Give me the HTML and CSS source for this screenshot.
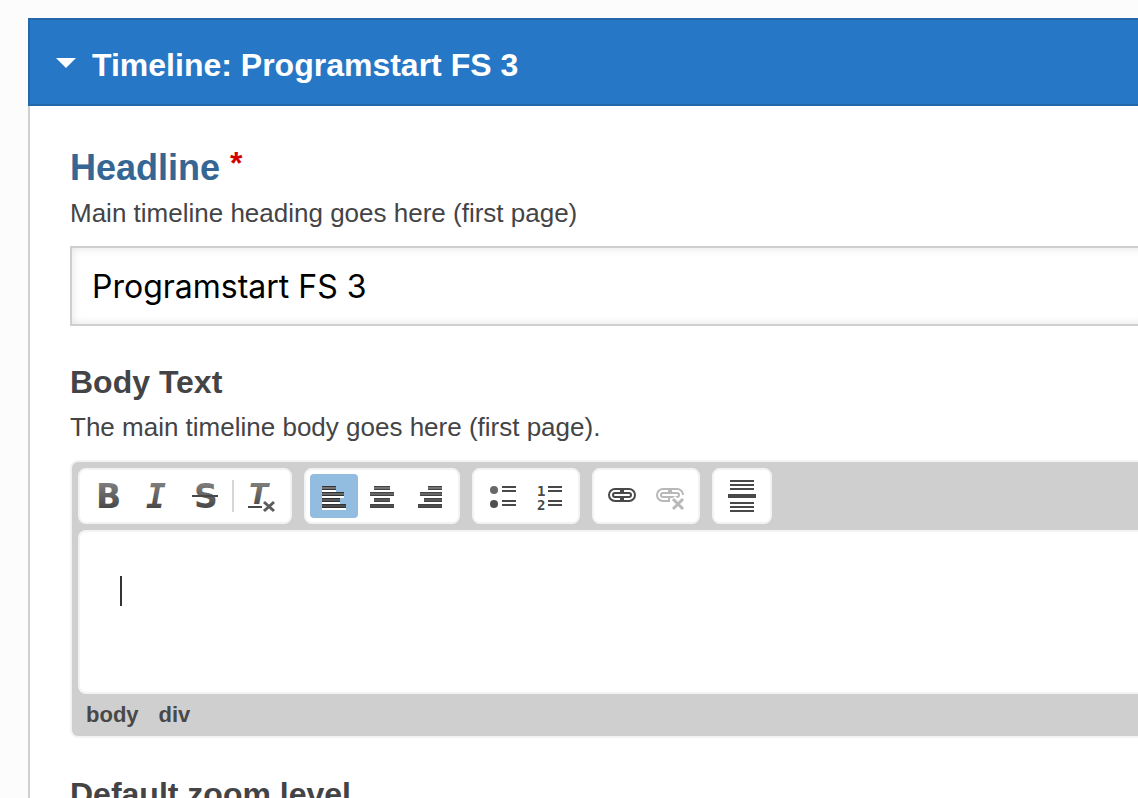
FILE: index.html
```html
<!DOCTYPE html>
<html lang="en">
<head>
<meta charset="utf-8">
<title>Timeline: Programstart FS 3</title>
<link rel="stylesheet" href="styles.css">
</head>
<body>
<svg class="defs" aria-hidden="true">
  <defs>
    <linearGradient id="ink" gradientUnits="userSpaceOnUse" x1="0" y1="10" x2="0" y2="34">
      <stop offset="0" stop-color="#7c7c7c"/>
      <stop offset="1" stop-color="#484848"/>
    </linearGradient>
  </defs>
</svg>
<main class="panel">
  <header class="panel-header">
    <button class="panel-toggle" type="button" aria-expanded="true">
      <svg class="caret-icon" viewBox="0 0 20 12"><path d="M0 1h20L10 11z" fill="#fff"/></svg>
      <span>Timeline: Programstart FS 3</span>
    </button>
  </header>
  <form class="panel-body">
    <div class="field">
      <label class="label label-main" for="headline">Headline <span class="required">*</span></label>
      <p class="hint">Main timeline heading goes here (first page)</p>
      <input class="text-input" id="headline" type="text" value="Programstart FS 3">
    </div>
    <div class="field">
      <span class="label" id="body-label">Body Text</span>
      <p class="hint hint-body">The main timeline body goes here (first page).</p>
      <div class="editor">
        <div class="toolbar" role="toolbar" aria-label="Formatting">
          <div class="group">
            <button class="tool" type="button" aria-label="Bold"><svg viewBox="0 0 48 44"><text class="glyph" x="12" y="34">B</text></svg></button>
            <button class="tool" type="button" aria-label="Italic"><svg viewBox="0 0 48 44"><text class="glyph glyph-slab" x="14" y="34">I</text></svg></button>
            <button class="tool" type="button" aria-label="Strikethrough"><svg viewBox="0 0 48 44"><text class="glyph" x="14" y="34">S</text><path d="M12 22h26" stroke="#484848" stroke-width="2"/></svg></button>
            <span class="separator"></span>
            <button class="tool" type="button" aria-label="Remove format"><svg viewBox="0 0 48 44"><text class="glyph glyph-slant" x="11" y="30">T</text><path d="M10 33h14" stroke="#484848" stroke-width="2"/><path d="M26 28l10 9M36 28l-10 9" stroke="#5c5c5c" stroke-width="3"/></svg></button>
          </div>
          <div class="group">
            <button class="tool tool-on" type="button" aria-label="Align left" aria-pressed="true"><svg viewBox="0 0 48 44"><path d="M12 14h14v4H12zM12 20h22v4H12zM12 26h18v4H12zM12 32h24v4H12z" fill="#fff"/><path d="M12 12h14v4H12zM12 18h22v4H12zM12 24h18v4H12zM12 30h24v4H12z" fill="url(#ink)"/><path d="M12 12.5h14M12 18.5h22M12 24.5h18M12 30.5h24M12 15.5h14M12 21.5h22M12 27.5h18M12 33.5h24" stroke="#333"/></svg></button>
            <button class="tool" type="button" aria-label="Center"><svg viewBox="0 0 48 44"><path d="M16 12h16v4H16zM12 18h24v4H12zM16 24h16v4H16zM12 30h24v4H12z" fill="url(#ink)"/><path d="M16 12.5h16M12 18.5h24M16 24.5h16M12 30.5h24M16 15.5h16M12 21.5h24M16 27.5h16M12 33.5h24" stroke="#444"/></svg></button>
            <button class="tool" type="button" aria-label="Align right"><svg viewBox="0 0 48 44"><path d="M22 12h14v4H22zM14 18h22v4H14zM18 24h18v4H18zM12 30h24v4H12z" fill="url(#ink)"/><path d="M22 12.5h14M14 18.5h22M18 24.5h18M12 30.5h24M22 15.5h14M14 21.5h22M18 27.5h18M12 33.5h24" stroke="#444"/></svg></button>
          </div>
          <div class="group">
            <button class="tool" type="button" aria-label="Bulleted list"><svg viewBox="0 0 48 44"><circle cx="16" cy="16" r="4" fill="#686868"/><circle cx="16" cy="30" r="4" fill="#505050"/><path d="M24 13h14M24 17h14M24 27h14M24 31h14" stroke="#484848" stroke-width="2"/></svg></button>
            <button class="tool" type="button" aria-label="Numbered list"><svg viewBox="0 0 48 44"><text class="digit" x="11" y="22">1</text><text class="digit" x="11" y="36">2</text><path d="M22 13h14M22 17h14M22 27h14M22 31h14" stroke="#484848" stroke-width="2"/></svg></button>
          </div>
          <div class="group">
            <button class="tool" type="button" aria-label="Link"><svg viewBox="0 0 48 44"><g fill="none" stroke="#484848" stroke-width="2"><path d="M23 18v-3h-6a6 6 0 0 0 0 12h6v-3M25 18v-3h6a6 6 0 0 1 0 12h-6v-3"/><rect x="15" y="19" width="18" height="4" rx="2"/></g></svg></button>
            <button class="tool" type="button" aria-label="Unlink" disabled><svg viewBox="0 0 48 44"><g fill="none" stroke="#b8b8b8" stroke-width="2"><path d="M23 18v-3h-6a6 6 0 0 0 0 12h6v-3M25 18v-3h6a6 6 0 0 1 6 6"/><rect x="15" y="19" width="18" height="4" rx="2"/></g><path d="M27 24l11 11M38 24l-11 11" stroke="#fff" stroke-width="6"/><path d="M27 25l10 10M37 25l-10 10" stroke="#b8b8b8" stroke-width="3"/></svg></button>
          </div>
          <div class="group">
            <button class="tool" type="button" aria-label="Page break"><svg viewBox="0 0 48 44"><path d="M12 7h24M12 11h24M12 15h24M12 29h24M12 33h24M12 37h24" stroke="#484848" stroke-width="2"/><path d="M10 22h28" stroke="#484848" stroke-width="4"/></svg></button>
          </div>
        </div>
        <div class="content" role="textbox" aria-multiline="true" aria-labelledby="body-label" contenteditable="true"><span class="text-cursor"></span></div>
        <nav class="path" aria-label="Elements path"><a href="#">body</a><a href="#">div</a></nav>
      </div>
    </div>
    <div class="field">
      <span class="label">Default zoom level</span>
    </div>
  </form>
</main>
</body>
</html>
```
FILE: styles.css
```css
* { box-sizing: border-box; }
body {
  margin: 0;
  height: 100vh;
  overflow: hidden;
  padding: 18px 0 0 28px;
  background: #fcfcfc;
  color: #444446;
  font-family: "Liberation Sans", Arial, sans-serif;
}
.defs { position: absolute; width: 0; height: 0; }
button { font: inherit; border: 0; padding: 0; background: none; color: inherit; }
.panel { min-height: 100%; }
.panel-header {
  background: #2678c7;
  border: 2px solid #2268ab;
  border-right: 0;
}
.panel-toggle {
  display: flex;
  align-items: center;
  gap: 16px;
  width: 100%;
  height: 84px;
  padding: 6px 26px 0;
  color: #fff;
  font-size: 32px;
  font-weight: bold;
}
.caret-icon { width: 20px; height: 12px; margin-bottom: 4px; }
.panel-body {
  padding: 40px 0 0 40px;
  background: #fff;
  border-left: 2px solid #cfcfcf;
}
.field { margin-bottom: 36px; }
.label { display: block; font-size: 32px; line-height: 40px; font-weight: bold; }
.label-main { color: #366694; font-size: 36px; line-height: 44px; }
.required { color: #d40000; font-size: 32px; line-height: 0; vertical-align: 6px; }
.hint { margin: 5px 0 15px; font-size: 26px; line-height: 36px; }
.hint-body { margin-top: 7px; }
.text-input {
  display: block;
  width: calc(100% + 12px);
  height: 80px;
  padding: 0 20px;
  border: 2px solid #cfcfcf;
  border-radius: 0;
  background: #fff;
  box-shadow: inset 0 0 10px #e2e2e2;
  color: #000;
  font-family: Inter, sans-serif;
  font-size: 32px;
  outline: 0;
}
.editor {
  padding: 6px 0 0 6px;
  background: #cfcfcf;
  border: 2px solid #f3f3f3;
  border-right: 0;
  border-radius: 8px 0 0 8px;
}
.toolbar { display: flex; flex-wrap: wrap; gap: 12px; margin-bottom: 6px; }
.group {
  display: flex;
  align-items: center;
  padding: 4px;
  background: #fff;
  border: 2px solid #f3f3f3;
  border-radius: 8px;
}
.tool { width: 48px; height: 44px; border-radius: 4px; }
.tool svg { display: block; width: 48px; height: 44px; }
.tool-on { background: #92bce0; }
.separator { width: 2px; height: 32px; margin: 0 4px; background: #d6d6d6; }
.glyph { fill: url(#ink); font: bold 33px "DejaVu Sans", sans-serif; }
.glyph-slab { font-family: "DejaVu Sans Mono", monospace; font-style: italic; }
.glyph-slant { font-style: italic; font-size: 28px; }
.digit { fill: #484848; font: bold 14px "DejaVu Sans Mono", monospace; }
.content {
  height: 164px;
  padding: 44px 40px;
  background: #fff;
  border: 2px solid #f3f3f3;
  border-right: 0;
  border-radius: 8px 0 0 8px;
  outline: 0;
}
.text-cursor { display: block; width: 2px; height: 30px; background: #333; }
.path { display: flex; gap: 20px; padding: 7px 8px; }
.path a { color: #484848; font-size: 22px; line-height: 28px; font-weight: bold; text-decoration: none; }
```
